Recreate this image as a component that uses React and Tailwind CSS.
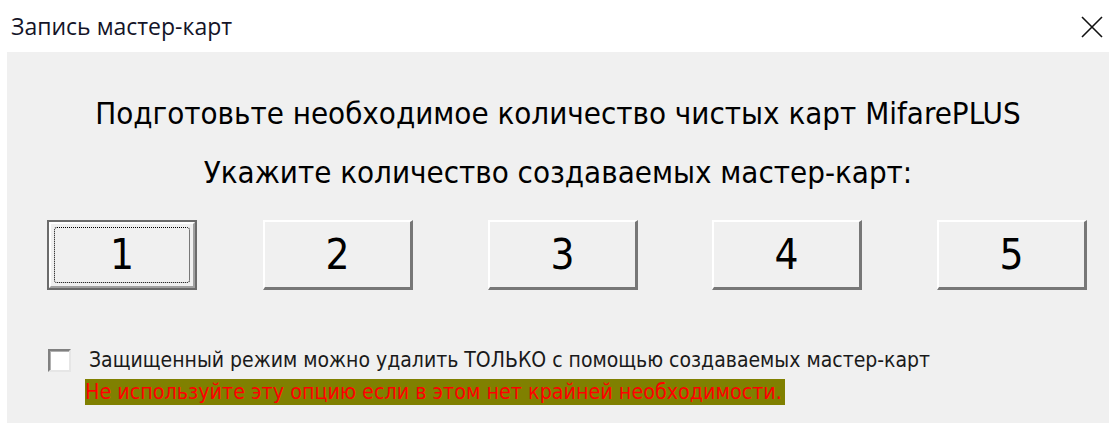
import React, { useState } from 'react';

// spacing before each button; the first gap in the row is a bit narrower
const COUNTS = [
  { n: 1, gap: 'ml-0' },
  { n: 2, gap: 'ml-[66px]' },
  { n: 3, gap: 'ml-[75px]' },
  { n: 4, gap: 'ml-[74px]' },
  { n: 5, gap: 'ml-[75px]' },
];

// Classic raised push button; the default one gets the dark frame and focus dots
const CountButton = ({ value, isDefault, className, onClick }) => {
  if (isDefault) {
    return (
      <button
        onClick={onClick}
        className={`${className} shrink-0 w-[150px] h-[70px] border-2 border-[#6b6b6b] bg-[#f0f0f0] p-0`}
      >
        <div className="w-full h-full border-t-2 border-l-2 border-white border-r-2 border-b-2 border-r-[#a0a0a0] border-b-[#a0a0a0] p-[3px]">
          <div className="w-full h-full border border-dotted border-black rounded-[3px] flex items-center justify-center text-[42px] leading-none text-black">
            {value}
          </div>
        </div>
      </button>
    );
  }
  return (
    <button
      onClick={onClick}
      className={`${className} shrink-0 w-[150px] h-[70px] bg-[#f0f0f0] border-t-2 border-l-2 border-white border-r-[3px] border-b-[3px] border-r-[#777] border-b-[#777] flex items-center justify-center text-[42px] leading-none text-black p-0`}
    >
      {value}
    </button>
  );
};

const App = () => {
  const [selected, setSelected] = useState(1);
  const [protectedMode, setProtectedMode] = useState(false);

  return (
    <div
      className="w-[1109px] h-[423px] bg-white flex flex-col overflow-hidden"
      style={{ fontFamily: '"DejaVu Sans Condensed", "DejaVu Sans", sans-serif' }}
    >
      {/* window caption */}
      <div className="h-[52px] flex items-start justify-between pl-[11px] pr-[3px] pt-[12px]">
        <span
          className="text-[23px] leading-[28px] text-[#141428]"
          style={{ fontFamily: '"Open Sans", "Noto Sans", sans-serif' }}
        >
          Запись мастер-карт
        </span>
        <button className="w-[28px] h-[28px] mt-[1px] flex items-center justify-center" aria-label="Закрыть">
          <svg width="22" height="22" viewBox="0 0 22 22">
            <path d="M1 1L21 21M21 1L1 21" stroke="#111" strokeWidth="1.6" />
          </svg>
        </button>
      </div>

      {/* dialog body */}
      <div className="ml-[7px] flex-1 bg-[#f0f0f0] flex flex-col">
        <div className="mt-[43px] text-center text-[31px] leading-[36px] text-black">
          Подготовьте необходимое количество чистых карт MifarePLUS
        </div>
        <div className="mt-[23px] text-center text-[31px] leading-[36px] text-black">
          Укажите количество создаваемых мастер-карт:
        </div>

        <div className="mt-[30px] pl-[40px] flex">
          {COUNTS.map(({ n, gap }) => (
            <CountButton
              key={n}
              value={n}
              className={gap}
              isDefault={n === selected}
              onClick={() => setSelected(n)}
            />
          ))}
        </div>

        <label className="mt-[57px] pl-[41px] flex items-center gap-[18px] cursor-pointer">
          <span
            onClick={() => setProtectedMode(!protectedMode)}
            className="shrink-0 w-[23px] h-[23px] bg-white border-2 border-t-[#808080] border-l-[#808080] border-b-[#e6e6e6] border-r-[#e6e6e6] shadow-[inset_1px_1px_0_#b0b0b0] flex items-center justify-center text-[15px] leading-none"
          >
            {protectedMode ? '✓' : ''}
          </span>
          <span className="text-[21px] leading-[26px] text-[#1a1a1a]">
            Защищенный режим можно удалить ТОЛЬКО с помощью создаваемых мастер-карт
          </span>
        </label>
        <div className="mt-[6px] pl-[78px]">
          <span className="inline-block bg-[#808000] text-[#ff0000] text-[21.3px] leading-[26px] pr-[3px]">
            Не используйте эту опцию если в этом нет крайней необходимости.
          </span>
        </div>
      </div>
    </div>
  );
};

export default App;
